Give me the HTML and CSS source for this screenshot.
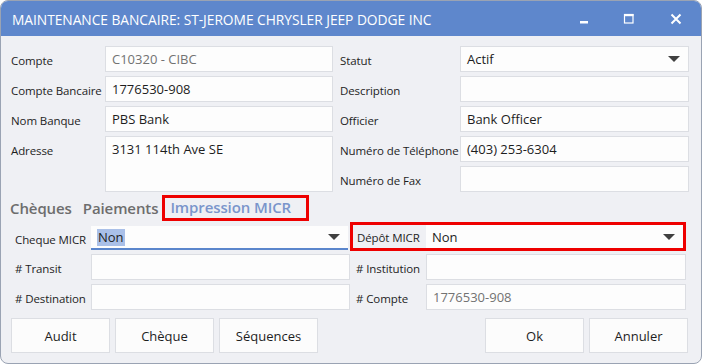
FILE: index.html
```html
<!DOCTYPE html>
<html lang="fr">
<head>
<meta charset="utf-8">
<title>Maintenance bancaire</title>
<link rel="stylesheet" href="styles.css">
</head>
<body>
<div class="window">
  <div class="titlebar">
    <div class="title">MAINTENANCE BANCAIRE: ST-JEROME CHRYSLER JEEP DODGE INC</div>
    <div class="controls">
      <svg class="ctl" width="12" height="12" viewBox="0 0 12 12"><rect x="4" y="8" width="9" height="2.5" fill="#fff"/></svg>
      <svg class="ctl" width="12" height="12" viewBox="0 0 12 12"><rect x="1.5" y="1.5" width="8.5" height="8.5" fill="none" stroke="#fff" stroke-width="1.2"/><rect x="1" y="1" width="9.5" height="2.2" fill="#fff"/></svg>
      <svg class="ctl" width="12" height="12" viewBox="0 0 12 12"><path d="M1.5 1.5 L10.5 10.5 M10.5 1.5 L1.5 10.5" stroke="#fff" stroke-width="2"/></svg>
    </div>
  </div>
  <div class="content">
    <div class="topgrid">
      <div class="lbl">Compte</div>
      <div class="field muted">C10320 - CIBC</div>
      <div class="lbl r">Statut</div>
      <div class="field select">Actif<span class="arrow"></span></div>

      <div class="lbl">Compte Bancaire</div>
      <div class="field">1776530-908</div>
      <div class="lbl r">Description</div>
      <div class="field"></div>

      <div class="lbl">Nom Banque</div>
      <div class="field">PBS Bank</div>
      <div class="lbl r">Officier</div>
      <div class="field">Bank Officer</div>

      <div class="lbl addr-lbl">Adresse</div>
      <div class="field area">3131 114th Ave SE</div>
      <div class="lbl r">Numéro de Téléphone</div>
      <div class="field">(403) 253-6304</div>

      <div class="lbl r fax-lbl">Numéro de Fax</div>
      <div class="field fax"></div>
    </div>

    <div class="tabs">
      <span class="tab">Chèques</span>
      <span class="tab">Paiements</span>
      <span class="tab active">Impression MICR</span>
    </div>

    <div class="micr">
      <div class="lbl2">Cheque MICR</div>
      <div class="field select focused"><span class="sel">Non</span><span class="arrow"></span></div>
      <div class="depot">
        <div class="lbl2">Dépôt MICR</div>
        <div class="field select">Non<span class="arrow"></span></div>
      </div>

      <div class="lbl2">#&nbsp;Transit</div>
      <div class="field"></div>
      <div class="lbl2 r2"># Institution</div>
      <div class="field"></div>

      <div class="lbl2"># Destination</div>
      <div class="field"></div>
      <div class="lbl2 r2"># Compte</div>
      <div class="field muted">1776530-908</div>
    </div>

    <div class="buttons">
      <div class="group">
        <div class="btn">Audit</div>
        <div class="btn">Chèque</div>
        <div class="btn">Séquences</div>
      </div>
      <div class="group">
        <div class="btn">Ok</div>
        <div class="btn">Annuler</div>
      </div>
    </div>
  </div>
</div>
</body>
</html>
```

FILE: styles.css
```css
* { box-sizing: border-box; }
html, body { margin: 0; padding: 0; background: #ffffff; }
body { font-family: "Open Sans", "Noto Sans", sans-serif; font-size: 12px; color: #1e1e1e; }

.window {
  width: 702px;
  height: 364px;
  border: 1px solid #9aa3b3;
  border-radius: 8px;
  overflow: hidden;
  background: #eff0f4;
  display: flex;
  flex-direction: column;
}

.titlebar {
  height: 35px;
  flex: none;
  background: #5e87cc;
  display: flex;
  align-items: center;
  justify-content: space-between;
  padding-left: 11px;
}
.title {
  color: #ffffff;
  font-size: 13.8px;
  letter-spacing: -0.05px;
  padding-top: 1px;
}
.controls { display: flex; gap: 35px; padding-right: 19px; align-items: center; }
.ctl { display: block; }

.content { padding: 10px 12px 0 10px; }

.topgrid {
  display: grid;
  grid-template-columns: 94px 228px 127px 229px;
  grid-template-rows: 26px 26px 26px 26px 26px;
  row-gap: 4px;
}
.lbl { padding-top: 7px; white-space: nowrap; font-size: 11.5px; letter-spacing: -0.1px; }
.lbl.r { padding-left: 7px; }
.addr-lbl { grid-row: 4 / span 2; }
.area { grid-row: 4 / span 2; align-items: flex-start !important; padding-top: 3px !important; }
.fax-lbl { grid-column: 3; grid-row: 5; }
.fax { grid-column: 4; grid-row: 5; }

.field {
  background: #fdfdfd;
  border: 1px solid #dcdee3;
  display: flex;
  align-items: center;
  padding: 0 6px;
  font-size: 13px;
  color: #1e1e1e;
  position: relative;
  white-space: nowrap;
}
.field.muted { color: #727272; }
.select { padding-right: 24px; }
.arrow {
  position: absolute;
  right: 8px;
  top: 50%;
  margin-top: -3px;
  width: 0; height: 0;
  border-left: 6px solid transparent;
  border-right: 6px solid transparent;
  border-top: 6px solid #404040;
}

.tabs {
  display: flex;
  margin-top: 3px;
  height: 25px;
  align-items: center;
  margin-left: -1px;
}
.tab {
  font-weight: 600;
  font-size: 15px;
  color: #6d6d6d;
  margin-right: 11px;
  letter-spacing: -0.1px;
}
.tab.active {
  color: #7a95cb;
  border: 3px solid #ee0000;
  padding: 0 15px 0 5px;
  height: 26px;
  line-height: 19px;
  margin-left: -7px;
}

.micr {
  display: grid;
  grid-template-columns: 76px 259px 76px 260px;
  grid-template-rows: 24px 26px 26px;
  row-gap: 4px;
  margin-top: 6px;
  margin-left: 4px;
}
.lbl2 { font-size: 11.5px; letter-spacing: -0.1px; display: flex; align-items: center; padding-top: 2px; white-space: nowrap; }
.r2 { padding-left: 6px; }
.focused {
  border: none;
  border-bottom: 2px solid #5b86cc;
  padding-left: 6px;
  margin-right: 2px;
  background: #fdfdfd;
}
.sel { background: #aac0e8; padding: 0 1px; line-height: 17px; }

.depot {
  grid-column: 3 / span 2;
  margin-top: -4px;
  height: 29px;
  border: 3px solid #ee0000;
  display: grid;
  grid-template-columns: 73px 1fr;
}
.depot .lbl2 { padding-left: 4px; }
.depot .field { border: none; }

.buttons {
  display: flex;
  justify-content: space-between;
  margin-top: 8px;
  padding-right: 1px;
}
.group { display: flex; gap: 5px; }
.btn {
  width: 99px;
  height: 35px;
  background: #fcfcfc;
  border: 1px solid #dcdee3;
  display: flex;
  align-items: center;
  justify-content: center;
  font-size: 13px;
  color: #1e1e1e;
}
```
